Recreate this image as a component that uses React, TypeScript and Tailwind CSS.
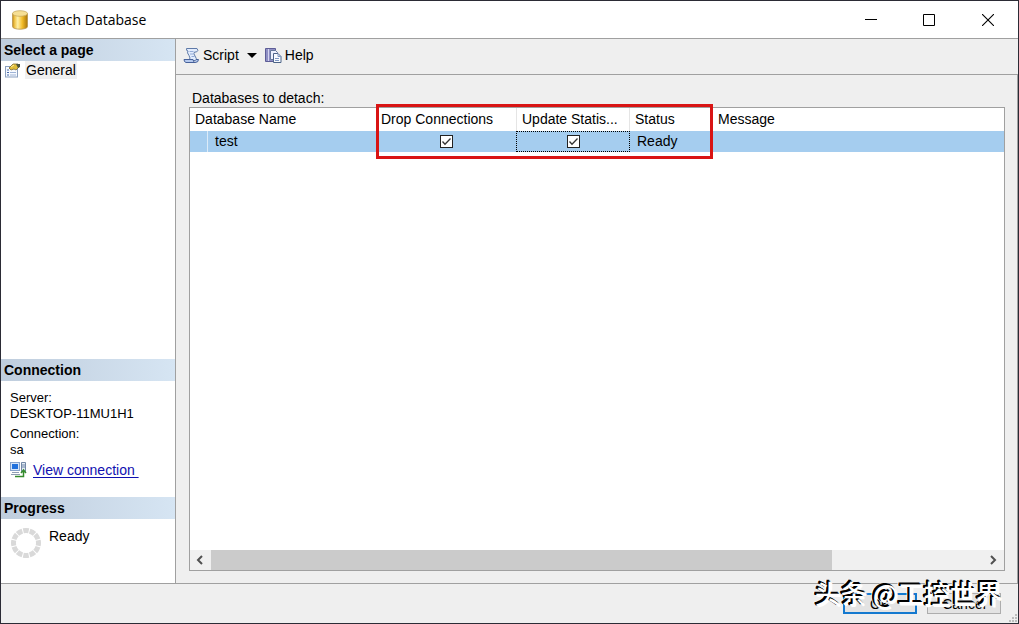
import type { ReactNode } from 'react';

function DatabaseIcon() {
  return (
    <svg width="18" height="20" viewBox="0 0 18 20" aria-hidden="true">
      <defs>
        <linearGradient id="gold" x1="0" x2="1" y1="0" y2="0">
          <stop offset="0" stopColor="#c08a18" />
          <stop offset="0.15" stopColor="#f2c64c" />
          <stop offset="0.35" stopColor="#fff0a8" />
          <stop offset="0.65" stopColor="#f4bd28" />
          <stop offset="1" stopColor="#a87408" />
        </linearGradient>
      </defs>
      <path d="M1.500 3.500v13c0 3.600 15 3.600 15 0v-13z" fill="url(#gold)" stroke="#b89650" strokeWidth="0.8" />
      <ellipse cx="9" cy="3.500" rx="7.500" ry="2.800" fill="#f6df94" stroke="#c8a95e" strokeWidth="0.8" />
    </svg>
  );
}

function PageIcon() {
  return (
    <svg width="16" height="15" viewBox="0 0 16 15" aria-hidden="true">
      <rect x="0.5" y="3.5" width="12" height="10.5" fill="#f6f9ff" stroke="#8ba0bf" />
      <path d="M2 7h2M2 9.500h2M2 12h2" stroke="#4668a8" />
      <path d="M5 9.500h6M5 12h6" stroke="#9fb4d6" />
      <path d="M4 5l4-4h5l2 2-4 4-2-1-3 1z" fill="#e0bd3a" stroke="#7c6a30" strokeWidth="0.8" />
      <path d="M11 1h4v3l-2 1z" fill="#4c5540" />
      <path d="M6 4l3-2" stroke="#fff0a0" />
    </svg>
  );
}

function ScriptIcon() {
  return (
    <svg width="17" height="17" viewBox="0 0 17 17" aria-hidden="true">
      <path d="M3.500 1.500h10.500q2 2-.5 3.500h-2q-1.500 1.500 .5 4 2 2.500 1 4.500H6Q8 11 6 8.500 3.500 5.500 5 4q-2 0-1.500-2.500z" fill="#e2ecfd" stroke="#5f7aa8" />
      <path d="M1 12.500h9q.5 3 2 3H3q-2-.5-2-3zM12 15.500q3.500 0 3.500-3h-2.500" fill="#b5c9ee" stroke="#46619a" />
      <path d="M6.500 4.500h4M7 7h3.500M8.500 9.500h3" stroke="#94acd8" />
    </svg>
  );
}

function HelpIcon() {
  return (
    <svg width="17" height="17" viewBox="0 0 17 17" aria-hidden="true">
      <path d="M.5 1.500h10v13H.5z" fill="#8f8fc4" stroke="#5d5d96" />
      <path d="M3.500 2v12" stroke="#d4d4f0" />
      <path d="M5.500 3.500h5l2 2v7h-7z" fill="#edf2ff" stroke="#687a9d" />
      <path d="M8.500 6.500h4.500l3 3v6H8.500z" fill="#f8fbff" stroke="#4d6488" />
      <path d="M13 6.500v3h3M10 11.500h4M10 13.500h4" fill="none" stroke="#7f98c2" />
    </svg>
  );
}

function ConnectionIcon() {
  return (
    <svg width="17" height="16" viewBox="0 0 17 16" aria-hidden="true">
      <rect x="0.5" y="0.5" width="9" height="8" fill="#d4e4fa" stroke="#86a2cb" />
      <rect x="2" y="2" width="6" height="5" fill="#1f70dd" />
      <path d="M2 10.500h7M1 12.500h9" stroke="#8e9db3" />
      <path d="M11.500.5h4v9h-4z" fill="#e6edf6" stroke="#7389a6" />
      <path d="M12 3h3M12 5h3" stroke="#6c84a7" />
      <path d="M5 14.500h8.500V9M11 11l2.500-3 2.500 3" fill="none" stroke="#348b2c" strokeWidth="1.5" />
    </svg>
  );
}

function Spinner() {
  return (
    <svg width="32" height="32" viewBox="0 0 32 32" aria-hidden="true">
      <circle cx="16" cy="16" r="12.5" fill="none" stroke="#d9d9d9" strokeWidth="5" pathLength="120" strokeDasharray="8.500 1.500" strokeDashoffset="4.250" />
    </svg>
  );
}

function SectionTitle({ children }: { children: ReactNode }) {
  return (
    <h2 className="h-[22px] shrink-0 bg-linear-to-r from-[#bfcddd] to-[#d6e5f3] px-[3px] text-[14px] leading-[22px] font-bold">
      {children}
    </h2>
  );
}

function Check({ label }: { label: string }) {
  return (
    <span className="relative mx-auto block size-[13px]">
      <input type="checkbox" defaultChecked aria-label={label} className="peer block size-[13px] appearance-none border border-[#222] bg-white" />
      <svg viewBox="0 0 13 13" className="pointer-events-none absolute inset-0 hidden size-[13px] peer-checked:block" aria-hidden="true">
        <path d="M2.500 6.500l2.500 2.700 5.500-5.700" fill="none" stroke="#333" strokeWidth="1.300" />
      </svg>
    </span>
  );
}

export default function App() {
  return (
    <main className="flex h-screen flex-col border border-[#2b2b35] bg-[#efefef] font-['Liberation_Sans',Arial,sans-serif] text-[14px] leading-4 text-black">
      <header className="flex h-[38px] shrink-0 items-center border-b border-[#a0a0a0] bg-white pl-[10px]">
        <DatabaseIcon />
        <h1 className="ml-[6px] flex-1 font-['Open_Sans','Noto_Sans',sans-serif] text-[14px] leading-5">Detach Database</h1>
        <button aria-label="Minimize" className="flex h-9 w-[58px] items-center justify-center">
          <svg width="12" height="12" aria-hidden="true"><path d="M0 5.500h12" stroke="#000" /></svg>
        </button>
        <button aria-label="Maximize" className="flex h-9 w-[58px] items-center justify-center">
          <svg width="12" height="12" aria-hidden="true"><path d="M.5.5h11v11H.5z" fill="none" stroke="#000" /></svg>
        </button>
        <button aria-label="Close" className="flex h-9 w-[60px] items-center justify-center">
          <svg width="12" height="12" aria-hidden="true"><path d="M0 0l12 12M12 0L0 12" stroke="#000" strokeWidth="1.100" /></svg>
        </button>
      </header>

      <div className="flex min-h-0 flex-1">
        <aside className="flex w-[175px] shrink-0 flex-col border-r border-[#a0a0a0] bg-white">
          <SectionTitle>Select a page</SectionTitle>
          <nav className="flex flex-1 items-start pl-1">
            <a href="#general" className="flex items-center gap-1">
              <PageIcon />
              <span className="bg-[#f0f0f0] px-px py-px">General</span>
            </a>
          </nav>
          <SectionTitle>Connection</SectionTitle>
          <div className="h-[116px] shrink-0 px-[9px] pt-[9px]">
            <dl className="text-[13px]">
              <dt>Server:</dt>
              <dd>DESKTOP-11MU1H1</dd>
              <dt className="mt-1">Connection:</dt>
              <dd>sa</dd>
            </dl>
            <a href="#connection" className="mt-1 flex items-center gap-[6px] text-[#1010b0]">
              <ConnectionIcon />
              <span className="whitespace-pre underline underline-offset-2">{'View connection '}</span>
            </a>
          </div>
          <SectionTitle>Progress</SectionTitle>
          <div className="flex h-16 shrink-0 items-start gap-[7px] pt-2 pl-[9px]">
            <Spinner />
            <span className="pt-px">Ready</span>
          </div>
        </aside>

        <section className="flex min-w-0 flex-1 flex-col">
          <div className="flex h-9 shrink-0 items-center border-b border-[#a0a0a0] pb-[3px] pl-[7px]">
            <button className="flex items-center gap-[3px]"><ScriptIcon />Script</button>
            <button aria-label="Script options" className="flex h-5 w-[26px] items-center justify-center">
              <svg width="10" height="5" aria-hidden="true"><path d="M0 0h10L5 5z" /></svg>
            </button>
            <button className="flex items-center gap-[3px]"><HelpIcon />Help</button>
          </div>

          <div className="flex min-h-0 flex-1 flex-col border-r border-[#a0a0a0] pt-[15px] pr-[12px] pb-[12px] pl-[13px]">
            <h2 className="px-[3px] pb-px">Databases to detach:</h2>
            <div className="relative flex min-h-0 flex-1 flex-col border border-[#a0a0a0] bg-white">
              <table className="w-full table-fixed border-separate border-spacing-0 text-left">
                <colgroup>
                  <col className="w-[186px]" />
                  <col className="w-[141px]" />
                  <col className="w-[113px]" />
                  <col className="w-[83px]" />
                  <col />
                </colgroup>
                <thead>
                  <tr className="h-[23px]">
                    <th className="p-0 pb-px pl-[5px] font-normal">Database Name</th>
                    <th className="border-r border-[#e5e5e5] p-0 pb-px pl-[5px] font-normal">Drop Connections</th>
                    <th className="truncate border-r border-[#e5e5e5] p-0 pb-px pl-[5px] font-normal">Update Statis...</th>
                    <th className="p-0 pb-px pl-[5px] font-normal">Status</th>
                    <th className="p-0 pb-px pl-[5px] font-normal">Message</th>
                  </tr>
                </thead>
                <tbody>
                  <tr className="h-[21px] bg-[#a5cdef]">
                    <td className="p-0">
                      <div className="flex h-[21px] items-center">
                        <span className="h-full w-[18px] border-r border-[#dcebf8]" />
                        <span className="pb-px pl-[7px]">test</span>
                      </div>
                    </td>
                    <td className="p-0"><Check label="Drop Connections" /></td>
                    <td className="p-0">
                      <div className="-ml-px flex h-[21px] items-center outline-1 -outline-offset-1 outline-dotted outline-black"><Check label="Update Statistics" /></div>
                    </td>
                    <td className="p-0 pb-px pl-[7px]">Ready</td>
                    <td className="p-0" />
                  </tr>
                </tbody>
              </table>
              <div className="pointer-events-none absolute -top-1 left-[186px] h-[55px] w-[337px] border-3 border-[#d91414]" />

              <div className="mt-auto flex h-5 shrink-0 bg-[#f0f0f0]">
                <button aria-label="Scroll left" className="flex w-[21px] items-center justify-center">
                  <svg width="9" height="10" aria-hidden="true"><path d="M6 1L2 5l4 4" fill="none" stroke="#505050" strokeWidth="2" /></svg>
                </button>
                <div className="flex flex-1">
                  <div className="flex-29 bg-[#cbcbcb]" />
                  <div className="flex-7" />
                </div>
                <button aria-label="Scroll right" className="flex w-[22px] items-center justify-center">
                  <svg width="7" height="10" aria-hidden="true"><path d="M1 1l4 4-4 4" fill="none" stroke="#505050" strokeWidth="2" /></svg>
                </button>
              </div>
            </div>
          </div>
        </section>
      </div>

      <footer className="relative flex h-10 shrink-0 items-start justify-end gap-[10px] border-t border-[#a0a0a0] pt-[9px] pr-[17px]">
        <button className="flex h-[21px] w-[74px] items-center justify-center border-2 border-[#1479cf] bg-[#e3e3e3]">OK</button>
        <button className="flex h-[21px] w-[74px] items-center justify-center border border-[#adadad] bg-[#e3e3e3]">Cancel</button>
        <span className="pointer-events-none absolute -top-[9px] right-[16px] font-['Noto_Sans_CJK_SC',sans-serif] text-[26px] leading-9 font-medium whitespace-nowrap text-white [text-shadow:-1px_-1px_0_#000,-2px_-1px_0_#000,-2px_-2px_0_#000,-3px_-2px_0_#fff,1px_1px_0_#fff]">头条 @工控世界</span>
        <svg width="9" height="9" className="absolute right-0 bottom-0" aria-hidden="true">
          <path d="M6 0h2v2H6zM3 3h2v2H3zM6 3h2v2H6zM0 6h2v2H0zM3 6h2v2H3zM6 6h2v2H6z" fill="#bdbdbd" />
        </svg>
      </footer>
    </main>
  );
}
